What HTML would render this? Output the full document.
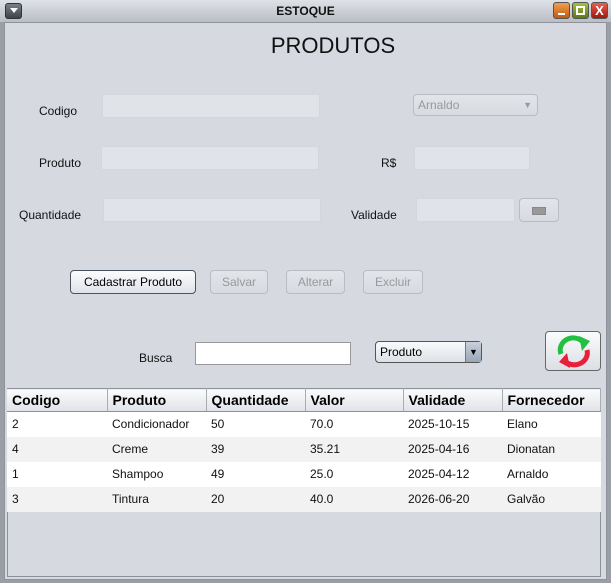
<!DOCTYPE html><html><head><style>
*{margin:0;padding:0;box-sizing:border-box}
body{width:611px;height:583px;background:#9a9ea6;font-family:"Liberation Sans",sans-serif;font-size:12px;position:relative;overflow:hidden}
.a{position:absolute}
.title{left:0;top:0;width:611px;height:22px;background:linear-gradient(#dfe2e7,#b9bdc5);}
.main{left:4px;top:22px;width:603px;height:558px;background:#d6d9e0;border:1px solid #8e939b}
.lbl{position:absolute;font-size:12px;color:#111}
.fld{position:absolute;background:#e0e3e8;border:1px solid #d3d6dc}
.btn{position:absolute;border:1px solid #b8bcc3;border-radius:4px;background:linear-gradient(#e2e5ea,#d7dae0);color:#999;font-size:12px;text-align:center;line-height:22px}
.wb{position:absolute;top:2px;width:17px;height:17px;border-radius:3px;border:1px solid #555}
table{position:absolute;left:7px;top:388px;width:594px;border-collapse:collapse;background:#fff}
th{height:23px;text-align:left;font-size:14px;font-weight:bold;padding-left:5px;background:linear-gradient(#fafbfc,#dfe2e7);border-right:1px solid #a8acb3;border-bottom:1px solid #8c9098;border-top:1px solid #8c9098}
td{height:25px;padding-left:5px;font-size:12px;color:#111}
tr.g td{background:#f2f2f2}
</style></head><body>
<div class="a title"></div>
<div class="a" style="left:5px;top:3px;width:17px;height:16px;border-radius:3px;background:linear-gradient(#7a8089,#3d434b);border:1px solid #333"></div>
<div class="a" style="left:10px;top:8px;width:0;height:0;border-left:4px solid transparent;border-right:4px solid transparent;border-top:5px solid #fff"></div>
<div class="a" style="left:0;top:4px;width:611px;text-align:center;font-weight:bold;font-size:12px;color:#111">ESTOQUE</div>
<div class="wb" style="left:553px;background:linear-gradient(#f0a050,#c05a10)"><div class="a" style="left:4px;top:10px;width:7px;height:2px;background:#fff"></div></div>
<div class="wb" style="left:572px;background:linear-gradient(#a8c040,#5a7a10)"><div class="a" style="left:3px;top:3px;width:9px;height:9px;border:2px solid #fff"></div></div>
<div class="wb" style="left:591px;background:linear-gradient(#e86050,#a01810);color:#fff;font-weight:bold;font-size:13px;text-align:center;line-height:15px">X</div>
<div class="a main"></div>
<div class="a" style="left:0;top:33px;width:666px;text-align:center;font-size:22px;color:#111">PRODUTOS</div>
<div class="lbl" style="left:39px;top:104px">Codigo</div>
<div class="fld" style="left:102px;top:94px;width:218px;height:24px"></div>
<div class="btn" style="left:413px;top:94px;width:125px;height:22px;text-align:left;padding-left:4px;line-height:20px">Arnaldo<span style="position:absolute;right:5px;font-size:9px">▼</span></div>
<div class="lbl" style="left:39px;top:156px">Produto</div>
<div class="fld" style="left:101px;top:146px;width:218px;height:24px"></div>
<div class="lbl" style="left:381px;top:156px">R$</div>
<div class="fld" style="left:414px;top:146px;width:116px;height:24px"></div>
<div class="lbl" style="left:19px;top:208px">Quantidade</div>
<div class="fld" style="left:103px;top:198px;width:218px;height:24px"></div>
<div class="lbl" style="left:351px;top:208px">Validade</div>
<div class="fld" style="left:416px;top:198px;width:99px;height:24px"></div>
<div class="btn" style="left:519px;top:198px;width:40px;height:24px"><div class="a" style="left:12px;top:8px;width:14px;height:8px;background:#999;border:1px solid #888"></div></div>
<div class="btn" style="left:70px;top:270px;width:126px;height:24px;color:#000;border-color:#4a5260;background:linear-gradient(#fbfcfd,#dfe3ea)">Cadastrar Produto</div>
<div class="btn" style="left:210px;top:270px;width:58px;height:24px">Salvar</div>
<div class="btn" style="left:286px;top:270px;width:59px;height:24px">Alterar</div>
<div class="btn" style="left:363px;top:270px;width:60px;height:24px">Excluir</div>
<div class="lbl" style="left:139px;top:351px">Busca</div>
<div class="a" style="left:195px;top:342px;width:156px;height:23px;background:#fff;border:1px solid #999"></div>
<div class="a" style="left:375px;top:341px;width:107px;height:22px;border:1px solid #555;border-radius:4px;background:linear-gradient(#fafbfc,#dde0e6);padding-left:4px;line-height:20px;font-size:12px">Produto<div class="a" style="right:0;top:0;width:16px;height:20px;background:linear-gradient(#c8d0dc,#98a6b8);border-left:1px solid #777;text-align:center;font-size:9px">▼</div></div>
<div class="a" style="left:545px;top:331px;width:56px;height:40px;border:1px solid #666;border-radius:4px;background:linear-gradient(#fafbfc,#dcdfe5)">
<svg width="56" height="40" viewBox="0 0 56 40"><path d="M15 22 A13 12 0 0 1 37 10" fill="none" stroke="#22c040" stroke-width="5"/><path d="M33 4 L44 9 L36 19 Z" fill="#22c040"/><path d="M41 18 A13 12 0 0 1 20 30" fill="none" stroke="#e8203a" stroke-width="5"/><path d="M24 36 L13 30 L21 21 Z" fill="#e8203a"/></svg></div>
<div class="a" style="left:7px;top:388px;width:594px;height:189px;background:#d6d9e0;border:1px solid #8c9098"></div>
<table>
<tr><th style="width:100px">Codigo</th><th style="width:99px">Produto</th><th style="width:99px">Quantidade</th><th style="width:98px">Valor</th><th style="width:99px">Validade</th><th>Fornecedor</th></tr>
<tr><td>2</td><td>Condicionador</td><td>50</td><td>70.0</td><td>2025-10-15</td><td>Elano</td></tr>
<tr class="g"><td>4</td><td>Creme</td><td>39</td><td>35.21</td><td>2025-04-16</td><td>Dionatan</td></tr>
<tr><td>1</td><td>Shampoo</td><td>49</td><td>25.0</td><td>2025-04-12</td><td>Arnaldo</td></tr>
<tr class="g"><td>3</td><td>Tintura</td><td>20</td><td>40.0</td><td>2026-06-20</td><td>Galvão</td></tr>
</table>
</body></html>
